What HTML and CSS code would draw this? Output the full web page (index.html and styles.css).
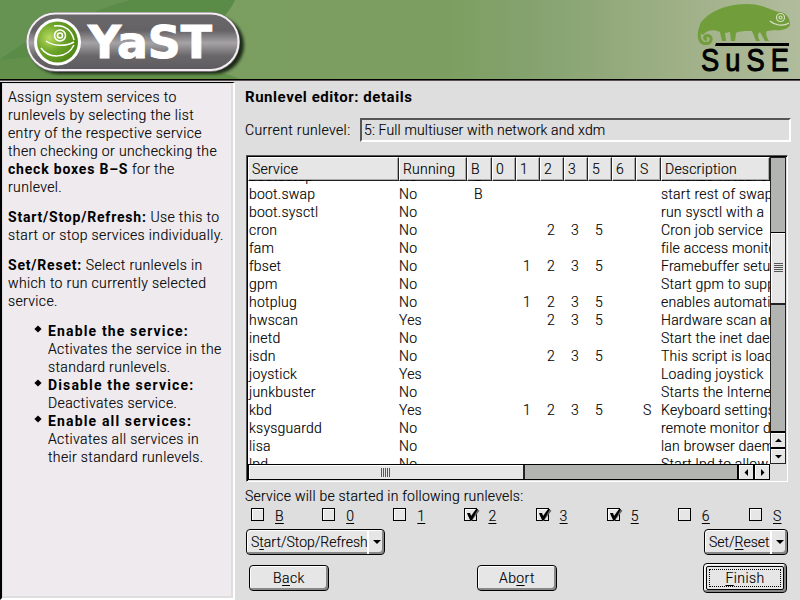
FILE: index.html
```html
<!DOCTYPE html>
<html lang="en">
<head>
<meta charset="utf-8">
<title>YaST</title>
<link rel="stylesheet" href="styles.css">
</head>
<body>
<header class="banner">
<svg class="swirl" width="800" height="79" viewBox="0 0 800 79">
<defs>
<linearGradient id="bg" x1="0" x2="1" y1="0" y2="0"><stop offset="0" stop-color="#7a9d60"/><stop offset=".56" stop-color="#7c9f61"/><stop offset=".66" stop-color="#84a26e"/><stop offset=".85" stop-color="#9fb087"/><stop offset="1" stop-color="#b1bc9d"/></linearGradient>
<linearGradient id="pill" x1="0" x2="0" y1="0" y2="1"><stop offset="0" stop-color="#6b686b"/><stop offset=".3" stop-color="#656265"/><stop offset=".52" stop-color="#a5a3a5"/><stop offset=".75" stop-color="#6a676a"/><stop offset="1" stop-color="#5d5a5d"/></linearGradient>
<radialGradient id="ball" cx=".3" cy=".4" r=".75"><stop offset="0" stop-color="#b9db61"/><stop offset=".45" stop-color="#6da528"/><stop offset="1" stop-color="#4e8514"/></radialGradient>
<filter id="soft"><feGaussianBlur stdDeviation="1.5"/></filter>
</defs>
<rect width="800" height="79" fill="url(#bg)"/>
<path d="M0 0H235C220 35 160 60 0 79Z" fill="#5b8c47"/>
<path d="M0 0H130C80 15 30 35 0 60Z" fill="#669352"/>
<path d="M0 60C90 50 190 58 240 79H0Z" fill="#63914c"/>
<rect x="30" y="16" width="214" height="58" rx="29" fill="#1c2b19" filter="url(#soft)"/>
<rect x="26" y="12" width="214" height="60" rx="30" fill="#777177"/>
<rect x="27.500" y="13.500" width="211" height="56.500" rx="28" fill="url(#pill)" stroke="#f2eef2" stroke-width="2"/>
<circle cx="57.500" cy="42" r="23.500" fill="#fff"/>
<circle cx="57.500" cy="42" r="20.500" fill="url(#ball)"/>
<g fill="none" stroke="#fff" stroke-width="1.500"><circle cx="60" cy="35.500" r="5.500"/><circle cx="60" cy="35.500" r="2.500"/><path d="M46 41C53 46 65 47 74 42M41 48C49 59 67 59 74 45M54 26C65 24 72 31 74 40"/></g>
<text class="yast" x="88" y="58" textLength="124" lengthAdjust="spacingAndGlyphs">YaST</text>
<path fill="#719d3b" d="M699 32C699 26 700 23 703 20C714 8 732 4 747 4C763 4 772 11 780 12C787 13 790 19 790 24C790 29 781 31 775 30L767 31C765 34 767 38 769 41H765L760 32C757 34 758 38 760 41H756L752 31C746 31 739 31 736 33L735 41H731L730 32L725 33L726 41H722L720 32C713 29 707 30 703 35Z"/>
<path fill="none" stroke="#719d3b" stroke-width="3" d="M700.500 28C698 36 699 43.500 706 43.500C712 43.500 713 36 708 35.500C704 35.500 703.500 39.500 707 39.500"/>
<g fill="none" stroke="#d9dfc4" stroke-width="1.200"><circle cx="780.500" cy="17.500" r="4"/><circle cx="780.500" cy="17.500" r="1.500"/><path d="M770 21C774 25 783 27 789 23"/></g>
<path d="M716 43H789V46H715Z"/>
<text class="suse" transform="translate(701 71) scale(.88 1)" x="0" y="0" textLength="100" lengthAdjust="spacing">SuSE</text>
</svg>
</header>
<div class="work">
<aside class="help">
<p>Assign system services to<br>runlevels by selecting the list<br>entry of the respective service<br>then checking or unchecking the<br><b>check boxes B–S</b> for the<br>runlevel.</p>
<p><b>Start/Stop/Refresh:</b> Use this to<br>start or stop services individually.</p>
<p><b>Set/Reset:</b> Select runlevels in<br>which to run currently selected<br>service.</p>
<ul>
<li><b>Enable the service:</b><br>Activates the service in the<br>standard runlevels.</li>
<li><b>Disable the service:</b><br>Deactivates service.</li>
<li><b>Enable all services:</b><br>Activates all services in<br>their standard runlevels.</li>
</ul>
</aside>
<main>
<h1>Runlevel editor: details</h1>
<div class="current"><span>Current runlevel:</span><div class="field">5: Full multiuser with network and xdm</div></div>
<div class="list">
<div class="view">
<div class="row head"><span>Service</span><span>Running</span><span>B</span><span>0</span><span>1</span><span>2</span><span>3</span><span>5</span><span>6</span><span>S</span><span>Description</span></div>
<div class="rows"><div class="scrolled" id="rows"></div></div>
</div>
<div class="vbar"><div class="vthumb"><i></i></div><div class="vtrough"></div><div class="btn"><svg width="13" height="13"><path d="M3 8L6.500 4.500L10 8Z"/></svg></div><div class="btn"><svg width="13" height="13"><path d="M3 5L6.500 8.500L10 5Z"/></svg></div></div>
<div class="hbar"><div class="hthumb"><i></i></div><div class="htrough"></div><div class="btn"><svg width="13" height="13"><path d="M8 3L4.500 6.500L8 10Z"/></svg></div><div class="btn"><svg width="13" height="13"><path d="M5 3L8.500 6.500L5 10Z"/></svg></div></div>
<div class="corner"></div>
</div>
<p class="caption">Service will be started in following runlevels:</p>
<div class="checks" id="checks"></div>
<div class="menus"><button class="menu start"><span>S<u>t</u>art/Stop/Refresh</span><i></i></button><button class="menu set"><span>Set/<u>R</u>eset</span><i></i></button></div>
<div class="buttons"><button class="push">B<u>a</u>ck</button><button class="push">Ab<u>o</u>rt</button><button class="push default"><span><u>F</u>inish</span></button></div>
</main>
</div>
<script src="script.js"></script>
</body>
</html>
```
FILE: script.js
```js
const levels = ["B", "0", "1", "2", "3", "5", "6", "S"];
const services = [
  ["bootsetup", "No", "B", "Initialize virtual co"],
  ["boot.swap", "No", "B", "start rest of swap"],
  ["boot.sysctl", "No", "", "run sysctl with a"],
  ["cron", "No", "235", "Cron job service"],
  ["fam", "No", "", "file access monitor"],
  ["fbset", "No", "1235", "Framebuffer setup"],
  ["gpm", "No", "", "Start gpm to supp"],
  ["hotplug", "No", "1235", "enables automatic"],
  ["hwscan", "Yes", "235", "Hardware scan and"],
  ["inetd", "No", "", "Start the inet daem"],
  ["isdn", "No", "235", "This script is loadin"],
  ["joystick", "Yes", "", "Loading joystick"],
  ["junkbuster", "No", "", "Starts the Internet"],
  ["kbd", "Yes", "1235S", "Keyboard settings"],
  ["ksysguardd", "No", "", "remote monitor dae"],
  ["lisa", "No", "", "lan browser daemon"],
  ["lpd", "No", "", "Start lpd to allow"]
];
document.getElementById("rows").innerHTML = services.map(([name, running, on, text]) =>
  `<div class="row"><span>${name}</span><span>${running}</span>${levels.map(l => `<span>${on.includes(l) ? l : ""}</span>`).join("")}<span>${text}</span></div>`
).join("");
const tick = '<svg class="tick" width="15" height="14"><path d="M4 5L7 10L14 1" fill="none" stroke="#666" stroke-width="2.500" transform="translate(.5 1)"/><path d="M3 5H6L7 8L12 1H14L8 12H6Z"/></svg>';
document.getElementById("checks").innerHTML = levels.map(l =>
  `<label><span class="box">${"235".includes(l) ? tick : ""}</span><u>${l}</u></label>`
).join("");
```
FILE: styles.css
```css
* { box-sizing: border-box; }
body { margin: 0; width: 800px; height: 600px; overflow: hidden; background: #dedede; color: #000; font: 300 14px/18px Roboto, "Liberation Sans", sans-serif; letter-spacing: .22px; -webkit-text-stroke: .15px #000; }
u { text-underline-offset: 2px; text-decoration-thickness: 1px; }
b { font-weight: 700; letter-spacing: .8px; -webkit-text-stroke: 0; }
.banner { height: 81px; border-bottom: 1px solid #5b5053; background: #000; }
.swirl { display: block; -webkit-text-stroke: 0; }
.yast { font: 700 44px "DejaVu Sans", sans-serif; fill: #fff; stroke: #fff; stroke-width: 1px; letter-spacing: 0; }
.suse { font: 31px "Liberation Sans", sans-serif; stroke: #000; stroke-width: 1px; letter-spacing: 0; }
.work { display: flex; height: 519px; }
.help { width: 235px; height: 518px; margin-top: 1px; padding: 5px 0 0 5px; border-left: 2px solid #000; border-top: 1px solid #000; border-right: 2px solid #fff; border-bottom: 2px solid #fff; background: #eeeaee; box-shadow: inset -2px -2px #dedede, inset 1px 1px #dedede; white-space: nowrap; letter-spacing: .36px; }
.help p { margin: 0 0 12px 1px; }
.help ul { margin: 0; padding: 0 0 0 41px; list-style: none; }
.help li b { letter-spacing: 1.15px; }
.help li::before { content: ""; float: left; width: 6px; height: 6px; margin: 4px 0 0 -13px; background: #000; transform: rotate(45deg) scale(.85); }
main { flex: 1; min-width: 0; padding: 7px 9px 0 11px; white-space: nowrap; }
h1 { margin: 0 0 12px -1px; font: 700 15px/18px Roboto, sans-serif; letter-spacing: .55px; -webkit-text-stroke: 0; }
.current { display: flex; margin-left: -1px; align-items: center; }
.current > span { width: 115px; letter-spacing: .36px; }
.field { flex: 1; height: 24px; padding: 1px 2px; border: 2px solid; border-color: #555 #fff #fff #555; letter-spacing: .15px; }
.list { display: grid; grid-template: 307px 16px / 522px 16px; width: 542px; height: 327px; margin-top: 13px; border: 1px solid; border-color: #555 #fff #fff #555; box-shadow: inset 1px 1px #000, inset -1px -1px #dedede; padding: 1px; background: #fff; }
.view { overflow: hidden; }
.row { display: grid; grid-template-columns: 151px 68px 25px 24px 24px 24px 24px 24px 24px 25px 109px; height: 18px; }
.row span:first-child { padding-left: 1px; }
.scrolled span:nth-child(n+3):nth-child(-n+10) { padding-left: 7px; }
.head { height: 23px; }
.row.head span { padding: 2px 3px; background: #e6e6e6; border: 1px solid; border-color: #fff #222 #222 #fff; box-shadow: inset -1px -1px #aaa; }
.rows { height: 284px; overflow: hidden; }
.scrolled { margin-top: -13px; }
.vbar { display: flex; flex-direction: column; border: 1px solid #222; background: #b2b4b1; }
.vthumb { height: 73px; margin-top: 74px; border-top: 1px solid #000; border-bottom: 2px solid #222; background: #e6e6e6; display: grid; place-items: center; box-shadow: inset 1px 1px #fff; }
.vthumb i { width: 9px; height: 10px; background: repeating-linear-gradient(#555 0 1px, #e6e6e6 1px 2px); }
.vtrough, .htrough { flex: 1; }
.hbar { display: flex; border: 1px solid #000; background: #b2b4b1; }
.hthumb { width: 276px; background: #e6e6e6; border-right: 2px solid #222; display: grid; place-items: center; box-shadow: inset 1px 1px #fff; }
.hthumb i { width: 10px; height: 9px; background: repeating-linear-gradient(90deg, #555 0 1px, #e6e6e6 1px 2px); }
.btn { display: grid; place-items: center; background: #e6e6e6; box-shadow: inset 1px 1px #fff; }
.vbar .btn { width: 14px; height: 16px; border-top: 2px solid #000; }
.hbar .btn { width: 16px; height: 14px; border-left: 2px solid #000; }
.corner { background: #dedede; }
.caption { margin: 5px 0 0 -1px; }
.checks { display: flex; height: 24px; padding: 2px 0 0 5px; }
.checks label { flex: none; width: 71.150px; display: flex; }
.box { width: 13px; height: 13px; margin: 1px 11px 0 0; border: 1px solid #000; background: #e6e6e6; box-shadow: inset 1px 1px #fff; }
.tick { display: block; margin: -1px; overflow: visible; }
.menus { display: flex; justify-content: space-between; }
button { padding: 0; border: 1px solid #000; border-radius: 4px; background: #e6e6e6; font: inherit; letter-spacing: inherit; color: #000; box-shadow: inset 1px 1px #fff, inset -2px -2px #888; }
.menu { display: flex; height: 26px; align-items: stretch; letter-spacing: 0; }
.start { width: 139px; }
.set { width: 84px; margin-right: 3px; }
.menu span { flex: 1; min-width: 0; padding: 3px 0 0 4px; text-align: left; }
.menu i { flex: none; width: 17px; border-left: 2px solid #fff; display: grid; place-items: center; }
.menu i::after { content: ""; border: 4px solid transparent; border-top-color: #000; border-bottom: 0; }
.buttons { display: flex; align-items: center; margin: 8px 0 0 3px; }
.push { flex: none; width: 80px; height: 26px; letter-spacing: .4px; }
.push + .push { margin-left: 148px; }
.push + .default { width: 84px; height: 30px; padding: 2px; margin-left: 146px; }
.default span { display: block; height: 24px; border: 1px solid #000; border-radius: 2px; outline: 1px dotted #000; outline-offset: -4px; line-height: 23px; }
```
